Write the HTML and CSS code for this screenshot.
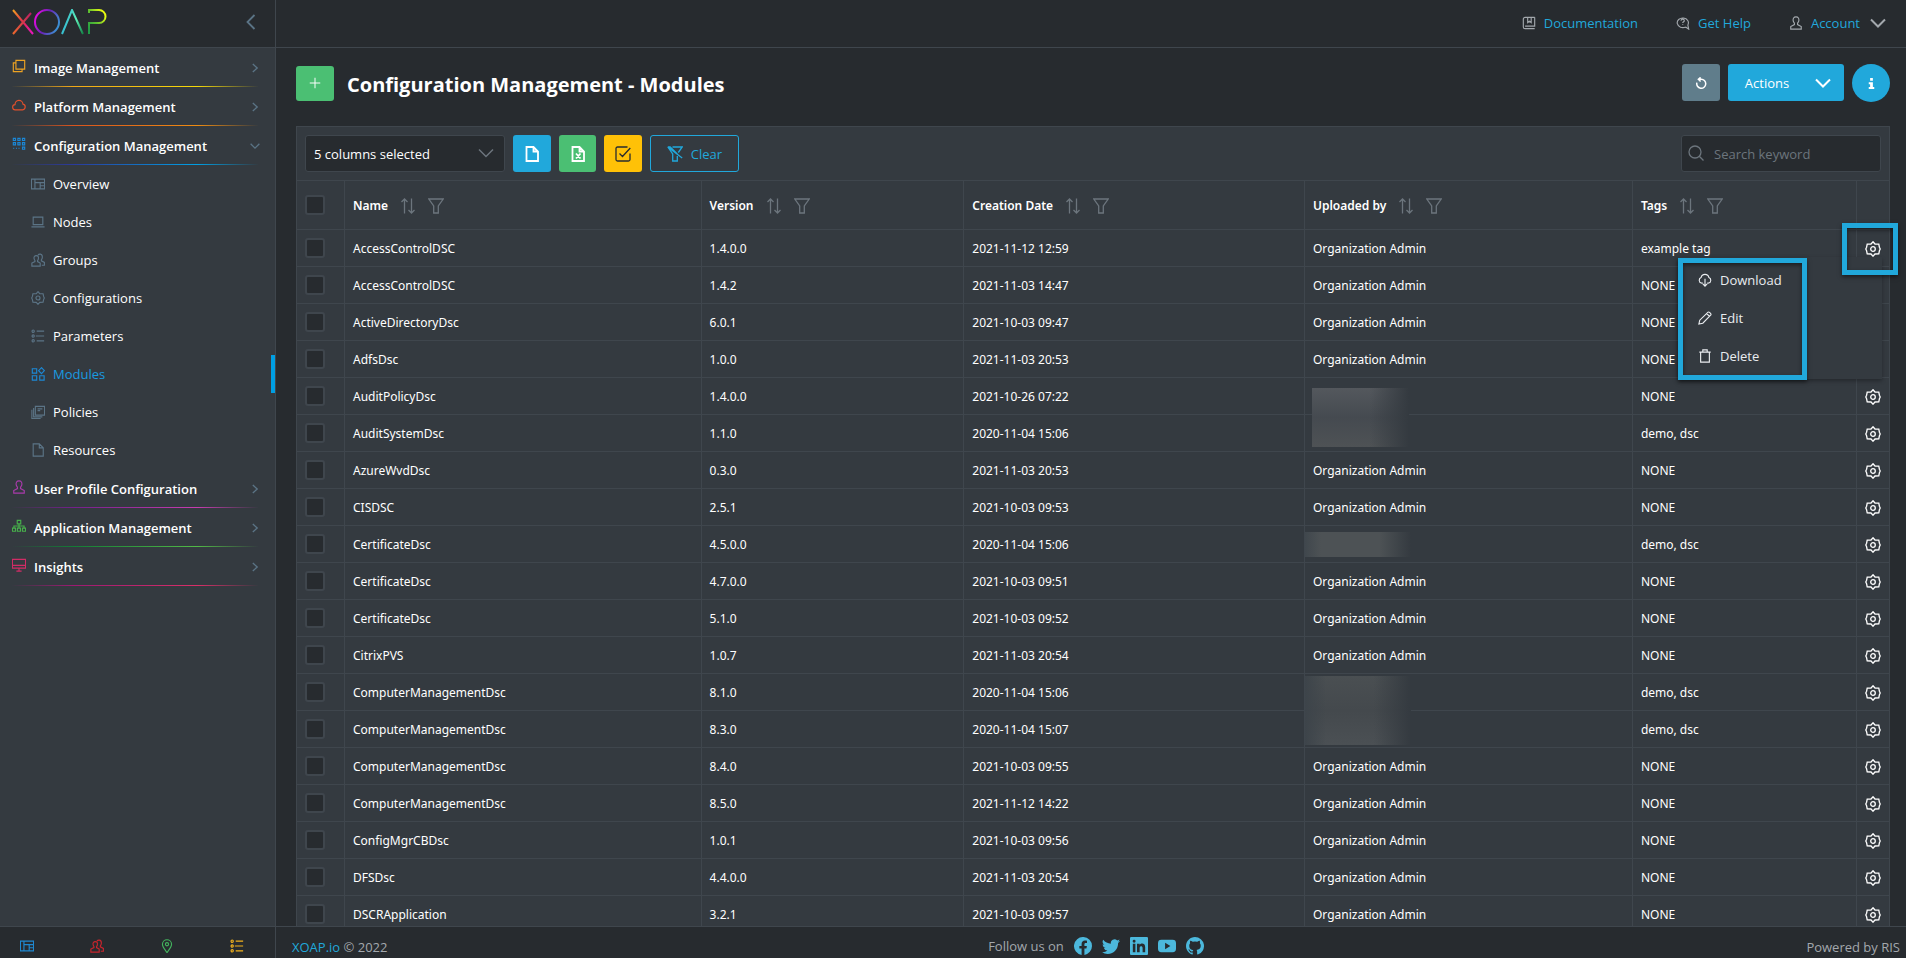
FILE: index.html
```html
<!DOCTYPE html>
<html lang="en">
<head>
  <meta charset="UTF-8">
  <meta name="viewport" content="width=device-width, initial-scale=1.0">
  <title>XOAP - Modules</title>
  <link rel="stylesheet" href="styles.css">
</head>
<body>
  <!-- Icon set -->
  <svg class="sprite" aria-hidden="true">
    <symbol id="i-images" viewBox="0 0 16 16"><path d="M4.500 1.500h10v10h-10zM4.500 4.500h-3v10h10v-3"/></symbol>
    <symbol id="i-cloud" viewBox="0 0 16 16"><path d="M4 13.500a3 3 0 0 1-.5-6 4.500 4.500 0 0 1 9-.5 3.300 3.300 0 0 1-.3 6.500z"/></symbol>
    <symbol id="i-nodes" viewBox="0 0 16 16"><path d="M1.500 1.500h2.500v2.500h-2.500zM6.700 1.500h2.500v2.500h-2.500zM12 1.500h2.500v2.500h-2.500zM1.500 6.500h2.500v2.500h-2.500zM6.700 6.500h2.500v2.500h-2.500zM12 6.500h2.500v2.500h-2.500zM12 11.500h2.500v2.500h-2.500zM1.500 13h1M4.500 13h1M7.500 13h1"/></symbol>
    <symbol id="i-overview" viewBox="0 0 16 16"><path d="M.5 2.500h15v11h-15zM4.500 2.500v11M4.500 6.500h11M10.500 6.500v7M10.500 10h5"/></symbol>
    <symbol id="i-laptop" viewBox="0 0 16 16"><path d="M2.500 2.500h11v8.500h-11zM.5 13.500h15"/></symbol>
    <symbol id="i-users" viewBox="0 0 16 16"><path d="M6 3c-2 0-2.800 1.500-2.500 3.300.1 1 .6 1.700 1 2.300v1.200L1 11.500v3.500h9.500v-3.500L7.500 9.800V8.600c.6-.7 1-1.600 1-2.600C8.700 4.200 8 3 6 3zM8 2.500C8.700 1 13 0 13 4.500c0 1.400-.5 2.500-1.200 3.300v1.200l3.500 1.800V14h-3"/></symbol>
    <symbol id="i-gear" viewBox="0 0 16 16"><path d="M8 .8l2 2.200 3.800.2.600 3L15.200 8l-.8 1.800-.6 3-3.800.2-2 2.200-2-2.200-3.800-.2-.6-3L.8 8l.8-1.800.6-3L6 3z"/><circle cx="8" cy="8" r="2.300"/></symbol>
    <symbol id="i-list" viewBox="0 0 16 16"><circle cx="2.500" cy="2.500" r="1.300"/><circle cx="2.500" cy="8" r="1.300"/><circle cx="2.500" cy="13.500" r="1.300"/><path d="M6.500 2.500h8.500M5.500 8h9.500M6.500 13.500h8.500"/></symbol>
    <symbol id="i-modules" viewBox="0 0 16 16"><path d="M1.500 2h5v5h-5zM1.500 10h5v5h-5zM10 10h5v5h-5zM12 .8l3.300 3.400L12 7.600 8.700 4.200z"/></symbol>
    <symbol id="i-policies" viewBox="0 0 16 16"><path d="M5 1.500h10.500v10H5zM3 3.500v10h10M1 5.500v10h10M7.500 4.500h5.500M7.500 6.500h3"/></symbol>
    <symbol id="i-file" viewBox="0 0 16 16"><path d="M2.500 1h7l4.500 4.500V15H2.500zM9.500 1v4.500H14"/></symbol>
    <symbol id="i-user" viewBox="0 0 16 16"><path d="M8 1C5.300 1 4.500 3 4.700 5c.1 1.500.7 2.300 1.500 3.200v1.600L2 12v3h12v-3l-4.200-2.200V8.200c.8-.9 1.400-1.700 1.500-3.200C11.500 3 10.700 1 8 1z"/></symbol>
    <symbol id="i-sitemap" viewBox="0 0 16 16"><path d="M6 1.500h4v4H6zM.5 10.500h3.500V14H.5zM6.200 10.500h3.500V14H6.200zM12 10.500h3.500V14H12zM8 5.500v5M2.200 10.500V8h11.600v2.500"/></symbol>
    <symbol id="i-desktop" viewBox="0 0 16 16"><path d="M.5 1.500h15v10H.5zM.5 8.500h15M8 11.500v3M5 15h6"/></symbol>
    <symbol id="i-pin" viewBox="0 0 16 16"><path d="M8 15.500C5 11.500 2.800 9 2.800 6a5.200 5.200 0 0 1 10.400 0c0 3-2.200 5.500-5.200 9.500z"/><circle cx="8" cy="6" r="1.800"/></symbol>
    <symbol id="i-right" viewBox="0 0 16 16"><path d="M5.500 3.500L10.500 8l-5 4.500"/></symbol>
    <symbol id="i-left" viewBox="0 0 16 16"><path d="M11.500 1l-7 7 7 7"/></symbol>
    <symbol id="i-down" viewBox="0 0 16 16"><path d="M1 4.500l7 7 7-7"/></symbol>
    <symbol id="i-book" viewBox="0 0 16 16"><path d="M14.500 1.500H3.500a2 2 0 0 0-2 2v9a2 2 0 0 0 2 2h11M14.500 1.500v10H3.500M6.500 1.500v6l2-1.500 2 1.500v-6"/></symbol>
    <symbol id="i-help" viewBox="0 0 16 16"><path d="M11 12.500a6.400 5.500 0 1 1 2.500-2.300M11 12.500l3.500 2.500-1-4.800M5.800 5.300c0-2.300 3.700-2.200 3.700 0 0 1.500-1.800 1.200-1.800 2.800M7.700 9.300v1"/></symbol>
    <symbol id="i-sort" viewBox="0 0 16 16"><path d="M4.500 15.500V1M1.500 4L4.500 1l3 3M11.500.5V15M8.500 12l3 3 3-3"/></symbol>
    <symbol id="i-filter" viewBox="0 0 16 16"><path d="M.8 1h14.400L10.300 8v7H5.700V8z"/></symbol>
    <symbol id="i-filter-off" viewBox="0 0 16 16"><path d="M5.500 1h9.700L11.300 6.500M10.300 10v5H5.700V8L.8 1l14.400 11M.8 1h2.400l7.100 7"/></symbol>
    <symbol id="i-excel" viewBox="0 0 16 16"><path d="M2.500 1h7l4.500 4.500V15H2.500zM9.500 1v4.500H14M6 7.500l4.500 5M10.500 7.500L6 12.500"/></symbol>
    <symbol id="i-check" viewBox="0 0 16 16"><path d="M12.500 1H2.500A1.500 1.500 0 0 0 1 2.500v11A1.500 1.500 0 0 0 2.500 15h11a1.500 1.500 0 0 0 1.500-1.500V7.500M4.500 7.500l3 3L15.300 2"/></symbol>
    <symbol id="i-search" viewBox="0 0 16 16"><circle cx="7" cy="7" r="6"/><path d="M11.300 11.300l4.200 4.200"/></symbol>
    <symbol id="i-plus" viewBox="0 0 16 16"><path d="M8 1v14M1 8h14"/></symbol>
    <symbol id="i-undo" viewBox="0 0 16 16"><path d="M2.500 7.500a6 6 0 1 0 5.500-4.500H4.500M7.500.5L4.500 3l3 3"/></symbol>
    <symbol id="i-info" viewBox="0 0 16 16"><path class="solid" d="M6 0h4v4H6zM4 6h6v7h2v3H4v-3h2V9H4z"/></symbol>
    <symbol id="i-download" viewBox="0 0 16 16"><path d="M5.500 11.500H4a3.300 3.300 0 0 1-.5-6.300 4.600 4.600 0 0 1 9 0 3.300 3.300 0 0 1-.5 6.300h-1.500M8 6.500v8.500M5.500 12.500L8 15l2.500-2.500"/></symbol>
    <symbol id="i-pencil" viewBox="0 0 16 16"><path d="M1 15l1-4.500L11.500 1.300c1-.8 4 2.200 3.200 3.200L5.500 14zM10 3l3 3"/></symbol>
    <symbol id="i-trash" viewBox="0 0 16 16"><path d="M1.500 3.500h13M3 3.500V15h10V3.500M5.500 3.500V1h5v2.500"/></symbol>
    <symbol id="i-facebook" viewBox="0 0 16 16"><path class="solid" d="M16 8a8 8 0 1 0-9.250 7.900v-5.600h-2V8h2V6.200c0-2 1.200-3.100 3-3.100.9 0 1.800.2 1.800.2v2h-1c-1 0-1.300.6-1.300 1.200V8h2.200l-.4 2.300H9.250v5.600A8 8 0 0 0 16 8z"/></symbol>
    <symbol id="i-twitter" viewBox="0 0 16 16"><path class="solid" d="M5 15c6 0 9.300-5 9.300-9.300v-.4A6.700 6.700 0 0 0 16 3.500a6.500 6.500 0 0 1-1.900.5 3.300 3.300 0 0 0 1.500-1.800 6.500 6.500 0 0 1-2.100.8 3.300 3.300 0 0 0-5.600 3A9.300 9.300 0 0 1 1.100 2.500a3.300 3.300 0 0 0 1 4.400 3.200 3.200 0 0 1-1.500-.4 3.300 3.300 0 0 0 2.600 3.200 3.300 3.300 0 0 1-1.500.1 3.300 3.300 0 0 0 3.100 2.300A6.600 6.600 0 0 1 0 13.500 9.300 9.300 0 0 0 5 15z"/></symbol>
    <symbol id="i-linkedin" viewBox="0 0 16 16"><path class="solid" fill-rule="evenodd" d="M1 0h14a1 1 0 0 1 1 1v14a1 1 0 0 1-1 1H1a1 1 0 0 1-1-1V1a1 1 0 0 1 1-1zM2.500 6v7.500h2.300V6zM3.650 2.400a1.300 1.300 0 1 0 0 2.600 1.300 1.300 0 0 0 0-2.600zM6.200 6v7.500h2.400V9.800c0-2.200 2.600-2.200 2.600 0v3.700h2.300V9c0-3.600-3.600-3.900-4.900-2V6z"/></symbol>
    <symbol id="i-youtube" viewBox="0 0 16 16"><path class="solid" fill-rule="evenodd" d="M3 2.500h10a3 3 0 0 1 3 3v5a3 3 0 0 1-3 3H3a3 3 0 0 1-3-3v-5a3 3 0 0 1 3-3zM6.300 5.200v5.600L11 8z"/></symbol>
    <symbol id="i-github" viewBox="0 0 16 16"><path class="solid" d="M8 0C3.600 0 0 3.600 0 8c0 3.500 2.300 6.500 5.500 7.600.4.100.5-.2.500-.4v-1.500c-2 .4-2.500-.5-2.700-.9-.1-.2-.5-.9-.8-1.100-.3-.2-.7-.5 0-.5s1.100.6 1.200.8c.7 1.200 1.900.9 2.300.7.100-.5.300-.9.500-1.100-1.800-.2-3.600-.9-3.600-4 0-.9.300-1.600.8-2.100-.1-.2-.4-1 .1-2.100 0 0 .7-.2 2.200.8a7.500 7.500 0 0 1 4 0c1.500-1 2.200-.8 2.200-.8.400 1.100.2 1.900.1 2.100.5.600.8 1.300.8 2.100 0 3.100-1.900 3.700-3.700 3.900.3.300.5.800.5 1.500v2.200c0 .2.200.5.600.4A8 8 0 0 0 8 0z"/></symbol>
  </svg>

  <div class="app">
    <aside class="sidebar">
      <div class="brand">
        <a href="#" class="logo" aria-label="XOAP">
          <svg viewBox="0 0 96 26" fill="none" stroke-width="2">
            <defs>
              <linearGradient id="g1" gradientUnits="userSpaceOnUse" x1="1" y1="0" x2="21" y2="26"><stop offset="0" stop-color="#f2a81d"/><stop offset=".5" stop-color="#e0264f"/><stop offset="1" stop-color="#e815c8"/></linearGradient>
              <linearGradient id="g2" gradientUnits="userSpaceOnUse" x1="21" y1="0" x2="1" y2="26"><stop offset="0" stop-color="#b3126b"/><stop offset="1" stop-color="#f06a2a"/></linearGradient>
              <linearGradient id="g3" gradientUnits="userSpaceOnUse" x1="22" y1="8" x2="48" y2="18"><stop offset="0" stop-color="#f308e8"/><stop offset=".45" stop-color="#6a22b8"/><stop offset="1" stop-color="#35a0d8"/></linearGradient>
              <linearGradient id="g4" gradientUnits="userSpaceOnUse" x1="52" y1="20" x2="72" y2="24"><stop offset="0" stop-color="#38c0d0"/><stop offset=".5" stop-color="#5cf0b8"/><stop offset="1" stop-color="#0b7a3c"/></linearGradient>
              <linearGradient id="g5" gradientUnits="userSpaceOnUse" x1="76" y1="20" x2="94" y2="8"><stop offset="0" stop-color="#1f9a45"/><stop offset=".5" stop-color="#5fc030"/><stop offset="1" stop-color="#e8fa10"/></linearGradient>
            </defs>
            <path d="M1 1l20 24" stroke="url(#g1)"/>
            <path d="M19 4L1 25" stroke="url(#g2)"/>
            <circle cx="35" cy="13" r="12" stroke="url(#g3)"/>
            <path d="M50 25L60 1l11 24" stroke="url(#g4)"/>
            <path d="M77 4V1h10a6 6 0 0 1 0 13H77v11" stroke="url(#g5)"/>
          </svg>
        </a>
        <button class="collapse" aria-label="Collapse menu"><svg class="icon"><use href="#i-left"/></svg></button>
      </div>

      <nav class="menu">
        <a href="#" class="group image"><svg class="icon"><use href="#i-images"/></svg><span>Image Management</span><svg class="icon arrow"><use href="#i-right"/></svg></a>
        <a href="#" class="group platform"><svg class="icon"><use href="#i-cloud"/></svg><span>Platform Management</span><svg class="icon arrow"><use href="#i-right"/></svg></a>
        <a href="#" class="group config"><svg class="icon"><use href="#i-nodes"/></svg><span>Configuration Management</span><svg class="icon arrow open"><use href="#i-down"/></svg></a>
        <div class="submenu">
          <a href="#"><svg class="icon"><use href="#i-overview"/></svg>Overview</a>
          <a href="#"><svg class="icon"><use href="#i-laptop"/></svg>Nodes</a>
          <a href="#"><svg class="icon"><use href="#i-users"/></svg>Groups</a>
          <a href="#"><svg class="icon"><use href="#i-gear"/></svg>Configurations</a>
          <a href="#"><svg class="icon"><use href="#i-list"/></svg>Parameters</a>
          <a href="#" class="active"><svg class="icon"><use href="#i-modules"/></svg>Modules</a>
          <a href="#"><svg class="icon"><use href="#i-policies"/></svg>Policies</a>
          <a href="#"><svg class="icon"><use href="#i-file"/></svg>Resources</a>
        </div>
        <a href="#" class="group profile"><svg class="icon"><use href="#i-user"/></svg><span>User Profile Configuration</span><svg class="icon arrow"><use href="#i-right"/></svg></a>
        <a href="#" class="group application"><svg class="icon"><use href="#i-sitemap"/></svg><span>Application Management</span><svg class="icon arrow"><use href="#i-right"/></svg></a>
        <a href="#" class="group insights"><svg class="icon"><use href="#i-desktop"/></svg><span>Insights</span><svg class="icon arrow"><use href="#i-right"/></svg></a>
      </nav>

      <div class="shortcuts">
        <a href="#" class="blue" aria-label="Overview"><svg class="icon"><use href="#i-overview"/></svg></a>
        <a href="#" class="red" aria-label="Groups"><svg class="icon"><use href="#i-users"/></svg></a>
        <a href="#" class="green" aria-label="Locations"><svg class="icon"><use href="#i-pin"/></svg></a>
        <a href="#" class="yellow" aria-label="Parameters"><svg class="icon"><use href="#i-list"/></svg></a>
      </div>
    </aside>

    <div class="page">
      <header class="topbar">
        <a href="#"><svg class="icon"><use href="#i-book"/></svg>Documentation</a>
        <a href="#"><svg class="icon"><use href="#i-help"/></svg>Get Help</a>
        <a href="#"><svg class="icon"><use href="#i-user"/></svg>Account<svg class="icon caret"><use href="#i-down"/></svg></a>
      </header>

      <main class="content">
        <div class="heading">
          <button class="btn success add" aria-label="Add module"><svg class="icon"><use href="#i-plus"/></svg></button>
          <h1>Configuration Management - Modules</h1>
          <div class="heading-actions">
            <button class="btn secondary" aria-label="Reload"><svg class="icon"><use href="#i-undo"/></svg></button>
            <button class="btn info split">Actions<svg class="icon caret"><use href="#i-down"/></svg></button>
            <button class="btn info round" aria-label="Info"><svg class="icon"><use href="#i-info"/></svg></button>
          </div>
        </div>

        <section class="card">
          <div class="toolbar">
            <div class="columns">
              <select aria-label="Columns"><option>5 columns selected</option></select>
              <svg class="icon"><use href="#i-down"/></svg>
            </div>
            <button class="btn info" aria-label="Export CSV"><svg class="icon"><use href="#i-file"/></svg></button>
            <button class="btn success" aria-label="Export Excel"><svg class="icon"><use href="#i-excel"/></svg></button>
            <button class="btn warning" aria-label="Export selection"><svg class="icon"><use href="#i-check"/></svg></button>
            <button class="btn outlined"><svg class="icon"><use href="#i-filter-off"/></svg>Clear</button>
            <div class="search">
              <svg class="icon"><use href="#i-search"/></svg>
              <input type="text" placeholder="Search keyword" aria-label="Search keyword">
            </div>
          </div>

          <table>
            <colgroup>
              <col class="c-check"><col class="c-name"><col class="c-version"><col class="c-date"><col class="c-user"><col><col class="c-tools">
            </colgroup>
            <thead>
              <tr>
                <th><input type="checkbox" aria-label="Select all"></th>
                <th><div class="th">Name<svg class="icon"><use href="#i-sort"/></svg><svg class="icon"><use href="#i-filter"/></svg></div></th>
                <th><div class="th">Version<svg class="icon"><use href="#i-sort"/></svg><svg class="icon"><use href="#i-filter"/></svg></div></th>
                <th><div class="th">Creation Date<svg class="icon"><use href="#i-sort"/></svg><svg class="icon"><use href="#i-filter"/></svg></div></th>
                <th><div class="th">Uploaded by<svg class="icon"><use href="#i-sort"/></svg><svg class="icon"><use href="#i-filter"/></svg></div></th>
                <th><div class="th">Tags<svg class="icon"><use href="#i-sort"/></svg><svg class="icon"><use href="#i-filter"/></svg></div></th>
                <th></th>
              </tr>
            </thead>
            <tbody>
              <tr>
                <td><input type="checkbox" aria-label="Select row"></td><td>AccessControlDSC</td><td>1.4.0.0</td><td>2021-11-12 12:59</td><td>Organization Admin</td><td>example tag</td>
                <td class="tools menu-open">
                  <button aria-label="Row actions"><svg class="icon"><use href="#i-gear"/></svg></button>
                  <div class="row-menu">
                    <button><svg class="icon"><use href="#i-download"/></svg>Download</button>
                    <button><svg class="icon"><use href="#i-pencil"/></svg>Edit</button>
                    <button><svg class="icon"><use href="#i-trash"/></svg>Delete</button>
                    <div class="mark mark-menu"></div>
                  </div>
                  <div class="mark mark-gear"></div>
                </td>
              </tr>
              <tr><td><input type="checkbox" aria-label="Select row"></td><td>AccessControlDSC</td><td>1.4.2</td><td>2021-11-03 14:47</td><td>Organization Admin</td><td>NONE</td><td class="tools"><button aria-label="Row actions"><svg class="icon"><use href="#i-gear"/></svg></button></td></tr>
              <tr><td><input type="checkbox" aria-label="Select row"></td><td>ActiveDirectoryDsc</td><td>6.0.1</td><td>2021-10-03 09:47</td><td>Organization Admin</td><td>NONE</td><td class="tools"><button aria-label="Row actions"><svg class="icon"><use href="#i-gear"/></svg></button></td></tr>
              <tr><td><input type="checkbox" aria-label="Select row"></td><td>AdfsDsc</td><td>1.0.0</td><td>2021-11-03 20:53</td><td>Organization Admin</td><td>NONE</td><td class="tools"><button aria-label="Row actions"><svg class="icon"><use href="#i-gear"/></svg></button></td></tr>
              <tr><td><input type="checkbox" aria-label="Select row"></td><td>AuditPolicyDsc</td><td>1.4.0.0</td><td>2021-10-26 07:22</td><td class="hidden-name"><div class="smudge inset"></div></td><td>NONE</td><td class="tools"><button aria-label="Row actions"><svg class="icon"><use href="#i-gear"/></svg></button></td></tr>
              <tr><td><input type="checkbox" aria-label="Select row"></td><td>AuditSystemDsc</td><td>1.1.0</td><td>2020-11-04 15:06</td><td></td><td>demo, dsc</td><td class="tools"><button aria-label="Row actions"><svg class="icon"><use href="#i-gear"/></svg></button></td></tr>
              <tr><td><input type="checkbox" aria-label="Select row"></td><td>AzureWvdDsc</td><td>0.3.0</td><td>2021-11-03 20:53</td><td>Organization Admin</td><td>NONE</td><td class="tools"><button aria-label="Row actions"><svg class="icon"><use href="#i-gear"/></svg></button></td></tr>
              <tr><td><input type="checkbox" aria-label="Select row"></td><td>CISDSC</td><td>2.5.1</td><td>2021-10-03 09:53</td><td>Organization Admin</td><td>NONE</td><td class="tools"><button aria-label="Row actions"><svg class="icon"><use href="#i-gear"/></svg></button></td></tr>
              <tr><td><input type="checkbox" aria-label="Select row"></td><td>CertificateDsc</td><td>4.5.0.0</td><td>2020-11-04 15:06</td><td class="hidden-name"><div class="smudge single"></div></td><td>demo, dsc</td><td class="tools"><button aria-label="Row actions"><svg class="icon"><use href="#i-gear"/></svg></button></td></tr>
              <tr><td><input type="checkbox" aria-label="Select row"></td><td>CertificateDsc</td><td>4.7.0.0</td><td>2021-10-03 09:51</td><td>Organization Admin</td><td>NONE</td><td class="tools"><button aria-label="Row actions"><svg class="icon"><use href="#i-gear"/></svg></button></td></tr>
              <tr><td><input type="checkbox" aria-label="Select row"></td><td>CertificateDsc</td><td>5.1.0</td><td>2021-10-03 09:52</td><td>Organization Admin</td><td>NONE</td><td class="tools"><button aria-label="Row actions"><svg class="icon"><use href="#i-gear"/></svg></button></td></tr>
              <tr><td><input type="checkbox" aria-label="Select row"></td><td>CitrixPVS</td><td>1.0.7</td><td>2021-11-03 20:54</td><td>Organization Admin</td><td>NONE</td><td class="tools"><button aria-label="Row actions"><svg class="icon"><use href="#i-gear"/></svg></button></td></tr>
              <tr><td><input type="checkbox" aria-label="Select row"></td><td>ComputerManagementDsc</td><td>8.1.0</td><td>2020-11-04 15:06</td><td class="hidden-name"><div class="smudge double"></div></td><td>demo, dsc</td><td class="tools"><button aria-label="Row actions"><svg class="icon"><use href="#i-gear"/></svg></button></td></tr>
              <tr><td><input type="checkbox" aria-label="Select row"></td><td>ComputerManagementDsc</td><td>8.3.0</td><td>2020-11-04 15:07</td><td></td><td>demo, dsc</td><td class="tools"><button aria-label="Row actions"><svg class="icon"><use href="#i-gear"/></svg></button></td></tr>
              <tr><td><input type="checkbox" aria-label="Select row"></td><td>ComputerManagementDsc</td><td>8.4.0</td><td>2021-10-03 09:55</td><td>Organization Admin</td><td>NONE</td><td class="tools"><button aria-label="Row actions"><svg class="icon"><use href="#i-gear"/></svg></button></td></tr>
              <tr><td><input type="checkbox" aria-label="Select row"></td><td>ComputerManagementDsc</td><td>8.5.0</td><td>2021-11-12 14:22</td><td>Organization Admin</td><td>NONE</td><td class="tools"><button aria-label="Row actions"><svg class="icon"><use href="#i-gear"/></svg></button></td></tr>
              <tr><td><input type="checkbox" aria-label="Select row"></td><td>ConfigMgrCBDsc</td><td>1.0.1</td><td>2021-10-03 09:56</td><td>Organization Admin</td><td>NONE</td><td class="tools"><button aria-label="Row actions"><svg class="icon"><use href="#i-gear"/></svg></button></td></tr>
              <tr><td><input type="checkbox" aria-label="Select row"></td><td>DFSDsc</td><td>4.4.0.0</td><td>2021-11-03 20:54</td><td>Organization Admin</td><td>NONE</td><td class="tools"><button aria-label="Row actions"><svg class="icon"><use href="#i-gear"/></svg></button></td></tr>
              <tr><td><input type="checkbox" aria-label="Select row"></td><td>DSCRApplication</td><td>3.2.1</td><td>2021-10-03 09:57</td><td>Organization Admin</td><td>NONE</td><td class="tools"><button aria-label="Row actions"><svg class="icon"><use href="#i-gear"/></svg></button></td></tr>
            </tbody>
          </table>
        </section>
      </main>

      <footer class="footer">
        <div><a href="#">XOAP.io</a> © 2022</div>
        <div class="social">
          <span>Follow us on</span>
          <a href="#" aria-label="Facebook"><svg class="icon"><use href="#i-facebook"/></svg></a>
          <a href="#" aria-label="Twitter"><svg class="icon"><use href="#i-twitter"/></svg></a>
          <a href="#" aria-label="LinkedIn"><svg class="icon"><use href="#i-linkedin"/></svg></a>
          <a href="#" aria-label="YouTube"><svg class="icon"><use href="#i-youtube"/></svg></a>
          <a href="#" aria-label="GitHub"><svg class="icon"><use href="#i-github"/></svg></a>
        </div>
        <div class="powered">Powered by RIS</div>
      </footer>
    </div>
  </div>
</body>
</html>
```
FILE: styles.css
```css
:root {
  --bg: #272b2f;
  --panel: #343a40;
  --line: #3f464d;
  --blue: #21a8db;
  --green: #4bbf73;
  --yellow: #ffc107;
  --muted: #6c757d;
  --steel: #5b7486;
}

* {
  box-sizing: border-box;
}

body {
  margin: 0;
  background: var(--bg);
  color: #fff;
  font-family: "Segoe UI", "Open Sans", "Noto Sans", sans-serif;
  font-size: 13px;
  line-height: 18px;
}

a {
  color: var(--blue);
  text-decoration: none;
}

button, input, select {
  font: inherit;
  color: inherit;
}

button {
  padding: 0;
  border: none;
  background: none;
  cursor: pointer;
}

.sprite {
  position: absolute;
  width: 0;
  height: 0;
}

.icon {
  flex: none;
  width: 14px;
  height: 14px;
  fill: none;
  stroke: currentColor;
  stroke-width: 1.3;
}

.solid {
  fill: currentColor;
  stroke: none;
}

.app {
  display: flex;
  height: 100vh;
}

/* Sidebar */
.sidebar {
  display: flex;
  flex-direction: column;
  flex: none;
  width: 276px;
  background: var(--panel);
  border-right: 1px solid var(--line);
}

.brand {
  display: flex;
  align-items: center;
  justify-content: space-between;
  height: 48px;
  padding: 0 16px 4px 12px;
  background: var(--bg);
  border-bottom: 1px solid var(--line);
}

.logo svg {
  display: block;
  width: 96px;
  height: 26px;
}

.collapse {
  color: var(--steel);
}

.collapse .icon {
  display: block;
  width: 16px;
  height: 16px;
  stroke-width: 1.8;
}

.menu {
  flex: 1;
  min-height: 0;
  overflow: hidden;
}

.group {
  display: flex;
  align-items: center;
  height: 39px;
  margin: 0 17px 0 12px;
  padding-top: 2px;
  color: #fff;
  font-weight: 600;
  border-bottom: 1px solid transparent;
}

.group span {
  flex: 1;
  margin-left: 8px;
}

.group .icon {
  margin-bottom: 4px;
}

.group .arrow {
  margin: 0 -4px 0 0;
  color: var(--steel);
  stroke-width: 1.6;
}

.group .open {
  width: 10px;
  margin-right: -2px;
  stroke-width: 2;
}

.image { border-image: linear-gradient(90deg, transparent, #f0a818 25%, #f5d90a 75%, transparent) 1; }
.platform { border-image: linear-gradient(90deg, transparent, #d9541e 25%, #ee8c12 75%, transparent) 1; }
.config { border-image: linear-gradient(90deg, transparent, #2b3a9c 25%, #009fe3 75%, transparent) 1; }
.profile { border-image: linear-gradient(90deg, transparent, #73208a 25%, #c73db0 75%, transparent) 1; }
.application { border-image: linear-gradient(90deg, transparent, #147a35 25%, #52b947 75%, transparent) 1; }
.insights { border-image: linear-gradient(90deg, transparent, #9c1a72 25%, #d92f68 75%, transparent) 1; }

.image > .icon:first-child { color: #eda323; }
.platform > .icon:first-child { color: #e3502b; }
.config > .icon:first-child { color: #1b87d6; }
.profile > .icon:first-child { color: #a93bab; }
.application > .icon:first-child { color: #47b04b; }
.insights > .icon:first-child { color: #d12c66; }

.submenu a {
  display: flex;
  align-items: center;
  gap: 8px;
  height: 38px;
  padding-left: 31px;
  color: #fff;
}

.submenu .icon {
  color: var(--steel);
}

.submenu .active {
  color: #189be0;
  border-right: 4px solid #009fe3;
}

.submenu .active .icon {
  color: #1c88d4;
}

.shortcuts {
  display: flex;
  align-items: center;
  height: 32px;
  padding: 6px 0 0 20px;
  background: var(--bg);
  border-top: 1px solid var(--line);
}

.shortcuts a {
  flex: none;
  width: 70px;
}

.shortcuts a:last-child {
  width: auto;
}

.shortcuts .icon {
  display: block;
}

.shortcuts .blue { color: #1f88d0; }
.shortcuts .red { color: #c9252d; }
.shortcuts .green { color: #43b35e; }
.shortcuts .yellow { color: #f5b41d; }

/* Page */
.page {
  display: flex;
  flex-direction: column;
  flex: 1;
  min-width: 0;
}

.topbar {
  display: flex;
  align-items: center;
  justify-content: flex-end;
  gap: 38px;
  flex: none;
  height: 48px;
  padding: 0 20px 2px 0;
  border-bottom: 1px solid var(--line);
}

.topbar a {
  display: flex;
  align-items: center;
  gap: 8px;
}

.topbar .icon {
  color: #a3a8ad;
}

.topbar .caret {
  width: 16px;
  height: 16px;
  margin-left: 2px;
  stroke-width: 2;
}

.content {
  flex: 1;
  min-height: 0;
  padding: 16px 16px 0 20px;
  overflow-y: auto;
  scrollbar-width: none;
}

.heading {
  display: flex;
  align-items: center;
  height: 38px;
  margin-bottom: 24px;
}

h1 {
  margin: 3px 0 0 13px;
  font-size: 20px;
  font-weight: 700;
  line-height: 28px;
}

.heading-actions {
  display: flex;
  gap: 8px;
  margin-left: auto;
}

.btn {
  display: flex;
  align-items: center;
  justify-content: center;
  width: 38px;
  height: 37px;
  border-radius: 3px;
}

.info { background: var(--blue); }
.success { background: var(--green); }
.secondary { background: #607d8b; }
.warning { background: var(--yellow); color: #272b2f; }

.add {
  height: 35px;
}

.add .icon, .secondary .icon {
  width: 12px;
  height: 12px;
}

.secondary .icon {
  stroke-width: 2;
}

.split {
  gap: 26px;
  width: 116px;
  padding-left: 4px;
}

.split .icon {
  width: 16px;
  height: 16px;
  stroke-width: 2;
}

.round {
  height: 38px;
  border-radius: 50%;
}

.round .icon {
  width: 11px;
  height: 11px;
}

.outlined {
  gap: 8px;
  width: 89px;
  border: 1px solid var(--blue);
  color: var(--blue);
}

/* Table card */
.card {
  background: var(--panel);
  border: 1px solid var(--line);
  border-bottom: none;
}

.toolbar {
  display: flex;
  gap: 8px;
  padding: 8px;
}

.toolbar .success {
  width: 37px;
}

.toolbar .btn .icon {
  width: 16px;
  height: 16px;
}

.toolbar .info .icon, .toolbar .success .icon {
  stroke-width: 1.8;
}

.columns, .search {
  position: relative;
  width: 200px;
  height: 37px;
}

.search {
  margin-left: auto;
}

.columns select, .search input {
  width: 100%;
  height: 100%;
  padding: 0 8px;
  background: var(--bg);
  border: 1px solid var(--line);
  border-radius: 3px;
  appearance: none;
}

.search input {
  padding-left: 32px;
}

.search input::placeholder {
  color: var(--muted);
  opacity: 1;
}

.columns .icon, .search .icon {
  position: absolute;
  top: 10px;
  width: 16px;
  height: 16px;
  color: var(--muted);
  pointer-events: none;
}

.columns .icon {
  right: 11px;
  stroke-width: 1.5;
}

.search .icon {
  left: 7px;
}

table {
  width: 100%;
  table-layout: fixed;
  border-collapse: separate;
  border-spacing: 0;
  font-family: "Segoe UI", "Noto Sans", "Open Sans", sans-serif;
  font-size: 12px;
}

.c-check { width: 48px; }
.c-name { width: 22.4%; }
.c-version { width: 16.5%; }
.c-date { width: 21.4%; }
.c-user { width: 20.6%; }
.c-tools { width: 32px; }

th, td {
  height: 37px;
  padding: 2px 8px 0;
  border-top: 1px solid var(--line);
  border-right: 1px solid var(--line);
  text-align: left;
  white-space: nowrap;
}

th:first-child, td:first-child {
  padding-top: 0;
}

th:last-child, td:last-child {
  border-right: none;
}

th {
  height: 49px;
  font-weight: 600;
}

.th {
  display: flex;
  align-items: center;
}

.th .icon {
  width: 16px;
  height: 16px;
  margin-left: 12px;
  color: var(--muted);
}

input[type="checkbox"] {
  display: block;
  width: 20px;
  height: 20px;
  margin: 0;
  background: var(--bg);
  border: 2px solid var(--line);
  border-radius: 3px;
  appearance: none;
}

.tools {
  position: relative;
}

.menu-open {
  z-index: 1;
}

.tools > button {
  display: block;
}

.tools .icon {
  display: block;
  width: 16px;
  height: 16px;
}

/* Row context menu */
.row-menu {
  position: absolute;
  top: 27px;
  right: 7px;
  width: 204px;
  padding: 4px 0;
  background: var(--panel);
  box-shadow: 0 2px 4px rgba(0, 0, 0, 0.3);
}

.row-menu button {
  display: flex;
  align-items: center;
  gap: 8px;
  width: 100%;
  height: 38px;
  padding-left: 20px;
  color: #e9ecef;
  font-family: "Segoe UI", "Open Sans", sans-serif;
  font-size: 13px;
}

.row-menu .icon {
  width: 14px;
  height: 14px;
}

.mark {
  position: absolute;
  border: 5px solid var(--blue);
  box-shadow: 0 2px 4px rgba(0, 0, 0, 0.5), inset 0 2px 4px rgba(0, 0, 0, 0.5);
  pointer-events: none;
}

.mark-menu {
  top: 1px;
  left: 0;
  width: 129px;
  height: 122px;
}

.mark-gear {
  top: -7px;
  right: -9px;
  width: 56px;
  height: 52px;
}

/* Obscured user names */
.hidden-name {
  position: relative;
}

.smudge {
  position: absolute;
  left: 0;
  width: 106px;
  background: linear-gradient(90deg, #40474d, #4d5255 15%, #4d5255 70%, var(--panel));
}

.inset {
  top: 10px;
  left: 7px;
  width: 97px;
  height: 59px;
  background:
    linear-gradient(90deg, transparent 60%, var(--panel)),
    linear-gradient(#54585d, #454a50 50%, #4e5255);
}

.single {
  top: 6px;
  height: 25px;
}

.double {
  top: 2px;
  height: 69px;
  background:
    linear-gradient(90deg, #3d444a, transparent 20%, transparent 65%, var(--panel)),
    linear-gradient(#4a4f52, #44494d 50%, #4b5054);
}

/* Footer */
.footer {
  display: grid;
  grid-template-columns: 1fr auto 1fr;
  align-items: center;
  flex: none;
  height: 32px;
  padding: 8px 6px 0 16px;
  border-top: 1px solid var(--line);
  color: #a3a8ad;
}

.social {
  display: flex;
  align-items: center;
  gap: 10px;
  margin-top: -2px;
}

.social .icon {
  display: block;
  width: 18px;
  height: 18px;
  color: #4cb8dc;
}

.powered {
  text-align: right;
}
```
